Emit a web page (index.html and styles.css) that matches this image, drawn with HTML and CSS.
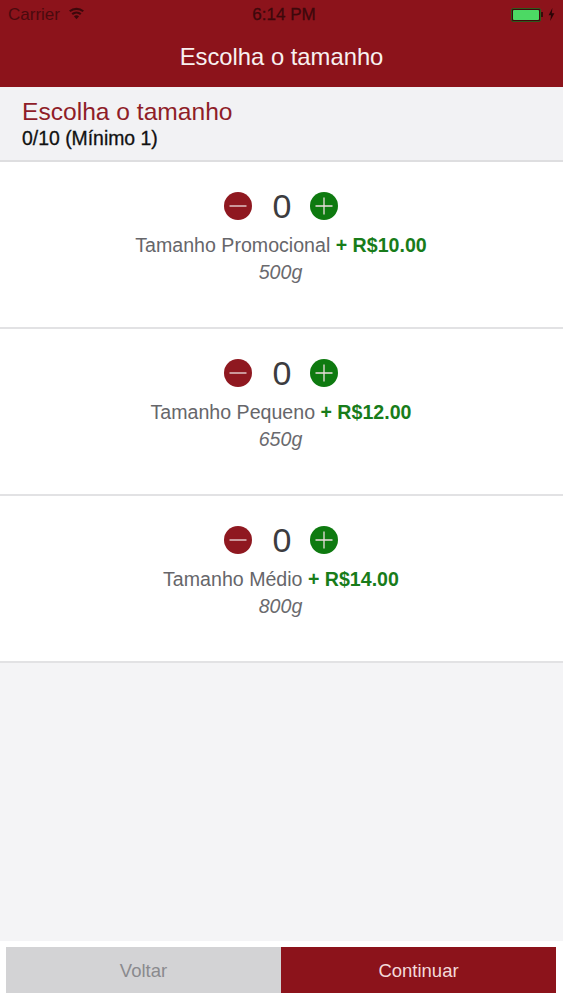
FILE: index.html
```
<!DOCTYPE html>
<html lang="pt">
<head>
<meta charset="utf-8">
<title>Escolha o tamanho</title>
<link rel="stylesheet" href="styles.css">
</head>
<body>
<div class="app">
  <header class="topbar">
    <div class="status">
      <div class="status-left">
        <span>Carrier</span>
        <svg class="wifi" viewBox="0 0 16 12" width="17" height="13"><path d="M8 11.5 5.6 8.6a3.7 3.7 0 0 1 4.8 0z"/><path d="M4.6 7.4 3.3 5.8a7.2 7.2 0 0 1 9.4 0l-1.3 1.6a5.2 5.2 0 0 0-6.8 0z"/><path d="M2.3 4.7 1 3.1a10.8 10.8 0 0 1 14 0l-1.3 1.6a8.8 8.8 0 0 0-11.4 0z"/></svg>
      </div>
      <div class="status-time">6:14 PM</div>
      <div class="status-right">
        <span class="battery"><span class="battery-fill"></span></span>
        <span class="battery-tip"></span>
        <svg class="bolt" viewBox="0 0 7 13" width="7" height="13"><path d="M4.4 0 0.6 7.3h2.4L2.2 13 6.4 5.3H3.8z"/></svg>
      </div>
    </div>
    <h1 class="nav-title">Escolha o tamanho</h1>
  </header>

  <section class="section-head">
    <h2 class="section-title">Escolha o tamanho</h2>
    <p class="section-count">0/10 (Mínimo 1)</p>
  </section>

  <main class="list">
    <article class="row">
      <div class="stepper">
        <svg class="step" viewBox="0 0 28 28" width="28" height="28"><circle class="minus" cx="14" cy="14" r="14"/><path class="sign" d="M5.5 14h17"/></svg>
        <span class="qty">0</span>
        <svg class="step" viewBox="0 0 28 28" width="28" height="28"><circle class="plus" cx="14" cy="14" r="14"/><path class="sign" d="M5.5 14h17M14 5.5v17"/></svg>
      </div>
      <p class="name">Tamanho Promocional <b class="price">+ R$10.00</b></p>
      <p class="weight">500g</p>
    </article>
    <article class="row">
      <div class="stepper">
        <svg class="step" viewBox="0 0 28 28" width="28" height="28"><circle class="minus" cx="14" cy="14" r="14"/><path class="sign" d="M5.5 14h17"/></svg>
        <span class="qty">0</span>
        <svg class="step" viewBox="0 0 28 28" width="28" height="28"><circle class="plus" cx="14" cy="14" r="14"/><path class="sign" d="M5.5 14h17M14 5.5v17"/></svg>
      </div>
      <p class="name">Tamanho Pequeno <b class="price">+ R$12.00</b></p>
      <p class="weight">650g</p>
    </article>
    <article class="row">
      <div class="stepper">
        <svg class="step" viewBox="0 0 28 28" width="28" height="28"><circle class="minus" cx="14" cy="14" r="14"/><path class="sign" d="M5.5 14h17"/></svg>
        <span class="qty">0</span>
        <svg class="step" viewBox="0 0 28 28" width="28" height="28"><circle class="plus" cx="14" cy="14" r="14"/><path class="sign" d="M5.5 14h17M14 5.5v17"/></svg>
      </div>
      <p class="name">Tamanho Médio <b class="price">+ R$14.00</b></p>
      <p class="weight">800g</p>
    </article>
  </main>

  <footer class="footer">
    <button class="btn btn-back" type="button">Voltar</button>
    <button class="btn btn-next" type="button">Continuar</button>
  </footer>
</div>
</body>
</html>
```
FILE: styles.css
```
* { box-sizing: border-box; }
html, body { margin: 0; padding: 0; height: 100%; }
body { font-family: "Liberation Sans", Arial, sans-serif; background: #f4f4f6; }
.app { width: 563px; height: 1000px; display: flex; flex-direction: column; overflow: hidden; }

.topbar { height: 87px; background: #8c131b; flex: none; }
.status { height: 28px; padding: 1px 7px 0 8px; display: grid; grid-template-columns: 1fr auto 1fr; align-items: center; color: #4a0a0e; font-size: 17px; }
.status-left { display: flex; align-items: center; gap: 8px; }
.wifi { fill: #3d080b; margin-top: -3px; }
.status-time { color: #3d080b; font-size: 17px; -webkit-text-stroke: 0.3px #3d080b; padding-left: 4px; }
.status-right { display: flex; align-items: center; justify-content: flex-end; }
.battery { width: 30px; height: 14px; border: 1px solid #2c5a1c; border-radius: 2px; padding: 1px; background: #3d0a0d; display: flex; }
.battery-fill { flex: 1; background: #4cd964; border-radius: 1px; }
.battery-tip { width: 2px; height: 5px; background: #3d080b; margin-right: 5px; }
.bolt { fill: #2a0507; margin-right: 1px; }

.nav-title { margin: 0; height: 59px; padding-bottom: 1px; display: flex; align-items: center; justify-content: center; color: #f8f0f0; font-size: 23.8px; font-weight: 400; }

.section-head { height: 75px; flex: none; padding: 11px 22px 0; background: #f2f2f4; border-bottom: 2px solid #dedee0; }
.section-title { margin: 0; color: #8f1d28; font-size: 24.6px; font-weight: 400; line-height: 28px; }
.section-count { margin: 1px 0 0; color: #111; font-size: 19.4px; line-height: 22px; -webkit-text-stroke: 0.3px #111; }

.row { height: 167px; background: #fff; border-bottom: 2px solid #e2e2e4; padding-top: 30px; text-align: center; }
.stepper { display: flex; justify-content: center; align-items: center; gap: 20px; height: 28px; padding-right: 2px; }
.qty { width: 18px; font-size: 34px; line-height: 34px; color: #3c3c40; font-weight: 400; padding-left: 1px; }
.minus { fill: #8f1820; }
.plus { fill: #0e7a10; }
.sign { stroke: #eddede; stroke-width: 1.3; fill: none; }
.name { margin: 14px 0 0; font-size: 19.6px; line-height: 22px; color: #66666a; padding-right: 1px; }
.price { color: #187c1a; font-weight: 700; }
.weight { margin: 5px 0 0; font-size: 19.6px; line-height: 22px; font-style: italic; color: #6a6a6e; padding-right: 2px; }

.list { flex: none; }
.footer { margin-top: auto; height: 59px; flex: none; background: #fff; padding: 6px 7px 7px 6px; display: flex; }
.btn { flex: 1; border: 0; margin: 0; padding: 1px 0 0; font: inherit; font-size: 18.5px; }
.btn-back { background: #d3d3d5; color: #8a8a8e; }
.btn-next { background: #8c131b; color: #f3dada; }
```
